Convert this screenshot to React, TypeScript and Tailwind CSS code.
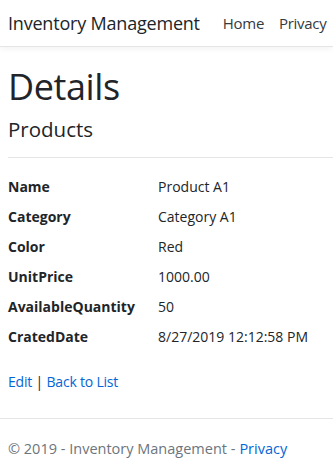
import React from 'react';

const rows: [string, string][] = [
    ['Name', 'Product A1'],
    ['Category', 'Category A1'],
    ['Color', 'Red'],
    ['UnitPrice', '1000.00'],
    ['AvailableQuantity', '50'],
    ['CratedDate', '8/27/2019 12:12:58 PM'],
];

export default function App() {
    return (
        <div className="min-h-[468px] bg-white text-[#212529] font-['Open_Sans',sans-serif] overflow-hidden">
            <nav className="h-[47px] border-b border-[#e5e5e5] shadow-[0_2px_6px_rgba(0,0,0,0.05)] flex items-center pl-2 whitespace-nowrap">
                <span className="text-[18px] tracking-[-0.2px] text-[#212529]">Inventory Management</span>
                <span className="ml-[23px] text-[15px] tracking-[-0.3px] text-[#343a40]">Home</span>
                <span className="ml-[15px] text-[15px] tracking-[-0.3px] text-[#343a40]">Privacy</span>
            </nav>

            <main className="pl-2 pt-[18px]">
                <h1 className="text-[36px] leading-[44px] tracking-[-0.4px]">Details</h1>
                <h4 className="text-[20.5px] leading-[26px] mt-[7px]">Products</h4>
                <hr className="border-t border-[#e5e5e5] mt-[15px]" />
                <dl className="pt-[13px] text-[14px]">
                    {rows.map(([k, v]) => (
                        <div key={k} className="flex h-[30px] items-center">
                            <dt className="w-[150px] font-bold">{k}</dt>
                            <dd>{v}</dd>
                        </div>
                    ))}
                </dl>
                <div className="mt-[20px] text-[14px] tracking-[-0.2px]">
                    <a className="text-[#0366d6]">Edit</a> | <a className="text-[#0366d6]">Back to List</a>
                </div>
            </main>

            <footer className="mt-[26px] border-t border-[#e5e5e5] pl-2 h-[60px] flex items-center text-[14.5px] text-[#6c757d]">
                © 2019 - Inventory Management - <a className="ml-1 text-[#0366d6]">Privacy</a>
            </footer>
        </div>
    );
}
